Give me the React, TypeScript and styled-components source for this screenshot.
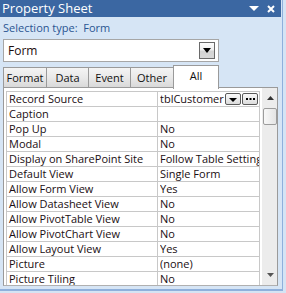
import React from "react";
import styled, { createGlobalStyle } from "styled-components";

const Global = createGlobalStyle`
  html, body { margin: 0; padding: 0; background: #d5e4f4; }
  body { font-family: "Open Sans", "DejaVu Sans", sans-serif; }
`;

const Frame = styled.div`
  width: 283px;
  height: 291px;
  box-sizing: border-box;
  background: #d6e5f5;
  border-right: 1px solid #8fb0dc;
  border-bottom: 2px solid #8fb0dc;
  display: flex;
  flex-direction: column;
  overflow: hidden;
`;

const TitleBar = styled.div`
  height: 17px;
  width: 281px;
  background: #3b67a2;
  color: #fff;
  display: flex;
  align-items: center;
  padding-left: 2px;
  box-sizing: border-box;
  font-size: 13px;
  flex-shrink: 0;
`;

const TitleText = styled.span`
  flex: 1;
  line-height: 17px;
`;

const TitleIcons = styled.div`
  display: flex;
  align-items: center;
  gap: 8px;
  padding-right: 6px;
`;

const SelectionLine = styled.div`
  height: 22px;
  display: flex;
  align-items: center;
  padding-left: 3px;
  padding-bottom: 2px;
  box-sizing: border-box;
  font-size: 11px;
  color: #2a5592;
  white-space: pre;
  flex-shrink: 0;
`;

const Combo = styled.div`
  margin-left: 3px;
  width: 216px;
  height: 23px;
  box-sizing: border-box;
  border: 1px solid #a6a6a6;
  background: #fff;
  display: flex;
  align-items: center;
  padding: 0 3px 0 4px;
  font-size: 12px;
  color: #1d0d0d;
  flex-shrink: 0;
`;

const ComboText = styled.span`
  flex: 1;
`;

const DropButton = styled.div`
  width: 16px;
  height: 17px;
  box-sizing: border-box;
  border: 1px solid #6a6a6a;
  background: linear-gradient(#fdfdfd 0%, #f0f0f0 45%, #d4d4d4 55%, #d8d8d8 100%);
  display: flex;
  align-items: center;
  justify-content: center;
`;

const TabRow = styled.div`
  margin-top: 3px;
  margin-left: 3px;
  height: 23px;
  display: flex;
  align-items: flex-end;
  flex-shrink: 0;
`;

const Tab = styled.div<{ $active?: boolean; $w: number }>`
  width: ${(p) => p.$w}px;
  height: ${(p) => (p.$active ? 24 : 21)}px;
  box-sizing: border-box;
  border: 1px solid #9a9a9a;
  border-bottom: ${(p) => (p.$active ? "none" : "1px solid #9a9a9a")};
  margin-left: -1px;
  margin-bottom: ${(p) => (p.$active ? -1 : 0)}px;
  background: ${(p) =>
    p.$active ? "#ffffff" : "linear-gradient(#f4f4f4 0%, #e9e9e9 50%, #d9d9d9 100%)"};
  font-size: 11px;
  color: #111;
  display: flex;
  align-items: ${(p) => (p.$active ? "flex-start" : "center")};
  justify-content: center;
  padding-top: ${(p) => (p.$active ? 2 : 0)}px;
  position: relative;
  z-index: ${(p) => (p.$active ? 2 : 1)};
  &:first-child { margin-left: 0; }
`;

const Sheet = styled.div`
  margin-left: 3px;
  margin-top: -1px;
  margin-bottom: 3px;
  width: 275px;
  flex: 1;
  box-sizing: border-box;
  border: 1px solid #9a9a9a;
  border-bottom: 1px solid #b0b0b0;
  background: #fff;
  display: flex;
  padding: 2px 0 0 2px;
  overflow: hidden;
`;

const Grid = styled.div`
  width: 254px;
  display: flex;
  flex-direction: column;
  border-top: 1px solid #c8c8c8;
  margin-top: 1px;
`;

const Row = styled.div`
  height: 15px;
  box-sizing: border-box;
  border-bottom: 1px solid #c8c8c8;
  display: flex;
  flex-shrink: 0;
  font-size: 11px;
  color: #1a0e12;
  line-height: 14px;
`;

const NameCell = styled.div`
  width: 152px;
  box-sizing: border-box;
  border-right: 1px solid #c8c8c8;
  border-left: 1px solid #c8c8c8;
  padding-left: 2px;
  white-space: nowrap;
  overflow: hidden;
`;

const ValueCell = styled.div`
  flex: 1;
  padding-left: 2px;
  white-space: nowrap;
  overflow: hidden;
  display: flex;
  align-items: center;
  border-right: 1px solid #c8c8c8;
`;

const ValueText = styled.span`
  flex: 1;
  overflow: hidden;
`;

const MiniButton = styled.div`
  width: 16px;
  height: 12px;
  box-sizing: border-box;
  border: 1px solid #5a5a5a;
  border-radius: 2px;
  background: linear-gradient(#fafafa, #dcdcdc);
  margin-right: 1px;
  display: flex;
  align-items: center;
  justify-content: center;
  flex-shrink: 0;
`;

const Scrollbar = styled.div`
  width: 16px;
  margin-left: 2px;
  margin-top: -2px;
  background: #ececec;
  display: flex;
  flex-direction: column;
  align-items: center;
`;

const ArrowBox = styled.div`
  height: 20px;
  width: 16px;
  display: flex;
  align-items: center;
  justify-content: center;
`;

const Thumb = styled.div`
  width: 14px;
  height: 17px;
  box-sizing: border-box;
  border: 1px solid #9c9c9c;
  border-radius: 2px;
  background: linear-gradient(90deg, #f8f8f8, #e4e4e4);
`;

const Spacer = styled.div`
  flex: 1;
`;

const rows: [string, string][] = [
  ["Record Source", "tblCustomer"],
  ["Caption", ""],
  ["Pop Up", "No"],
  ["Modal", "No"],
  ["Display on SharePoint Site", "Follow Table Settings"],
  ["Default View", "Single Form"],
  ["Allow Form View", "Yes"],
  ["Allow Datasheet View", "No"],
  ["Allow PivotTable View", "No"],
  ["Allow PivotChart View", "No"],
  ["Allow Layout View", "Yes"],
  ["Picture", "(none)"],
  ["Picture Tiling", "No"],
];

const tabs: [string, number][] = [
  ["Format", 44],
  ["Data", 43],
  ["Event", 43],
  ["Other", 44],
  ["All", 46],
];

export default function App() {
  return (
    <>
      <Global />
      <Frame>
        <TitleBar>
          <TitleText>Property Sheet</TitleText>
          <TitleIcons>
            <svg width="10" height="5" viewBox="0 0 10 5">
              <path d="M0 0H10L5 5Z" fill="#fff" />
            </svg>
            <svg width="8" height="8" viewBox="0 0 8 8">
              <path d="M1 1L7 7M7 1L1 7" stroke="#fff" strokeWidth="2" />
            </svg>
          </TitleIcons>
        </TitleBar>
        <SelectionLine>{"Selection type:  Form"}</SelectionLine>
        <Combo>
          <ComboText>Form</ComboText>
          <DropButton>
            <svg width="8" height="5" viewBox="0 0 8 5">
              <path d="M0 0H8L4 5Z" fill="#000" />
            </svg>
          </DropButton>
        </Combo>
        <TabRow>
          {tabs.map(([t, w]) => (
            <Tab key={t} $w={w} $active={t === "All"}>
              {t}
            </Tab>
          ))}
        </TabRow>
        <Sheet>
          <Grid>
            {rows.map(([n, v], i) => (
              <Row key={n}>
                <NameCell>{n}</NameCell>
                <ValueCell>
                  <ValueText>{v}</ValueText>
                  {i === 0 && (
                    <>
                      <MiniButton>
                        <svg width="8" height="5" viewBox="0 0 8 5">
                          <path d="M0 1H8L4 5Z" fill="#000" />
                        </svg>
                      </MiniButton>
                      <MiniButton>
                        <svg width="9" height="2" viewBox="0 0 9 2">
                          <rect x="0" y="0" width="2" height="2" fill="#000" />
                          <rect x="3.5" y="0" width="2" height="2" fill="#000" />
                          <rect x="7" y="0" width="2" height="2" fill="#000" />
                        </svg>
                      </MiniButton>
                    </>
                  )}
                </ValueCell>
              </Row>
            ))}
          </Grid>
          <Scrollbar>
            <ArrowBox>
              <svg width="7" height="4" viewBox="0 0 7 4">
                <path d="M0 4H7L3.5 0Z" fill="#333" />
              </svg>
            </ArrowBox>
            <Thumb />
            <Spacer />
            <ArrowBox>
              <svg width="7" height="4" viewBox="0 0 7 4">
                <path d="M0 0H7L3.5 4Z" fill="#555" />
              </svg>
            </ArrowBox>
          </Scrollbar>
        </Sheet>
      </Frame>
    </>
  );
}
